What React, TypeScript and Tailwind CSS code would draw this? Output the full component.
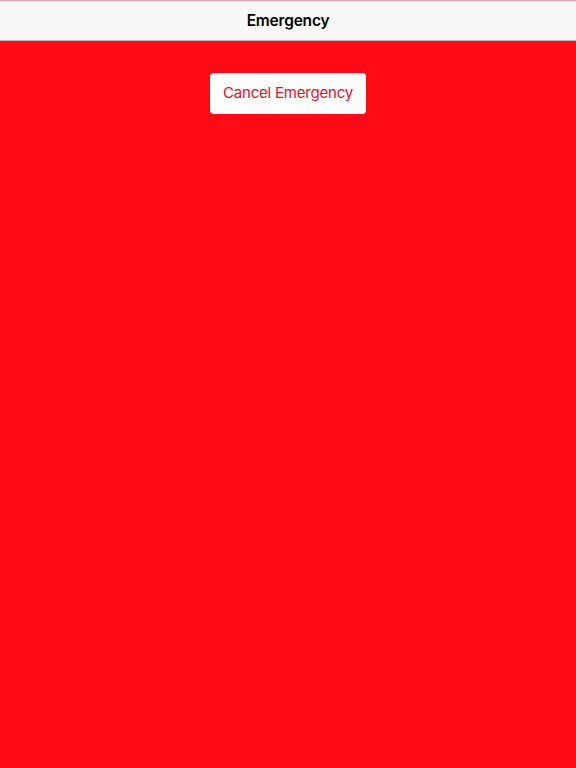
export default function App() {
  return (
    <div className="min-h-screen w-full bg-[#ff0a16] flex flex-col" style={{ fontFamily: "Inter, 'Noto Sans', sans-serif" }}>
      <header className="h-[41px] bg-[#f8f8f8] border-t border-t-[#e8a0b0] border-b border-b-[#c9b4b8] flex items-center justify-center">
        <h1 className="text-[15.5px] tracking-[-0.2px] font-semibold text-black">Emergency</h1>
      </header>
      <main className="flex flex-col items-center pt-[32px]">
        <button className="h-[41px] w-[156px] rounded-[4px] bg-white text-[#d4152f] text-[15px] tracking-[-0.2px]">
          Cancel Emergency
        </button>
      </main>
    </div>
  )
}
